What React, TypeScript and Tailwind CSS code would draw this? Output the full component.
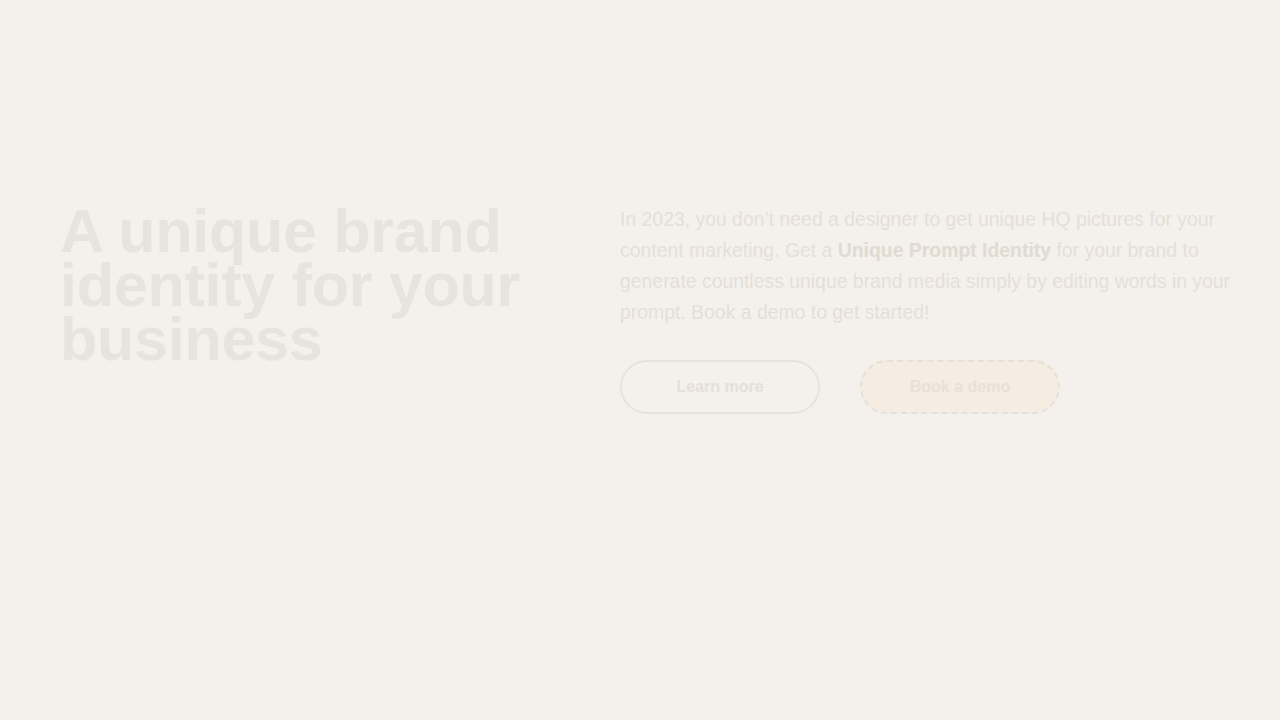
export default function App() {
  return (
    <div
      className="min-h-screen w-full bg-[#f4f1ec]"
      style={{ fontFamily: '"Liberation Sans", Arial, sans-serif' }}
    >
      <section className="flex items-start pl-[60px] pr-[40px] pt-[204px]">
        {/* Headline */}
        <div className="w-[560px] shrink-0">
          <h1 className="text-[61px] font-bold leading-[54px] tracking-[-0.25px] text-[#e7e3de]">
            A unique brand
            <br />
            identity for your
            <br />
            business
          </h1>
        </div>

        {/* Copy + actions */}
        <div className="flex-1">
          <p className="text-[19.4px] leading-[31px] text-[#e4dfd9]">
            In 2023, you don&rsquo;t need a designer to get unique HQ pictures for your content
            marketing. Get a <strong className="font-bold text-[#e0dad3]">Unique Prompt Identity</strong> for
            your brand to generate countless unique brand media simply by editing words in your
            prompt. Book a demo to get started!
          </p>

          <div className="mt-[32px] flex items-center gap-[40px]">
            <button className="flex h-[54px] w-[200px] items-center justify-center rounded-full border-2 border-[#e7e2dd] text-[16px] font-bold text-[#e4dfd9]">
              Learn more
            </button>
            <button className="flex h-[54px] w-[200px] items-center justify-center rounded-full border-2 border-dashed border-[#e6e0da] bg-[#f5ede1] text-[16px] font-bold text-[#e8e1d7]">
              Book a demo
            </button>
          </div>
        </div>
      </section>
    </div>
  )
}
